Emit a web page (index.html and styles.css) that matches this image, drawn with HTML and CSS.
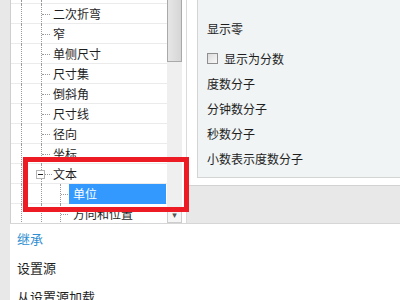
FILE: index.html
```html
<!DOCTYPE html>
<html lang="zh-CN">
<head>
    <meta charset="UTF-8">
    <title>单位设置</title>
    <link rel="stylesheet" href="styles.css">
</head>
<body>
    <div class="page">
        <div class="strip"></div>
        <div class="main">
            <div class="top">
                <!--左侧树-->
                <div class="tree-box">
                    <div class="tree">
                        <div class="row stub"><span class="g0"></span><span class="g1"></span><span class="g2"></span></div>
                        <div class="row"><span class="g0"></span><span class="g1"></span><span class="g2"><i class="dash"></i></span><span class="label">二次折弯</span></div>
                        <div class="row"><span class="g0"></span><span class="g1"></span><span class="g2"><i class="dash"></i></span><span class="label">窄</span></div>
                        <div class="row"><span class="g0"></span><span class="g1"></span><span class="g2"><i class="dash"></i></span><span class="label">单侧尺寸</span></div>
                        <div class="row"><span class="g0"></span><span class="g1"></span><span class="g2"><i class="dash"></i></span><span class="label">尺寸集</span></div>
                        <div class="row"><span class="g0"></span><span class="g1"></span><span class="g2"><i class="dash"></i></span><span class="label">倒斜角</span></div>
                        <div class="row"><span class="g0"></span><span class="g1"></span><span class="g2"><i class="dash"></i></span><span class="label">尺寸线</span></div>
                        <div class="row"><span class="g0"></span><span class="g1"></span><span class="g2"><i class="dash"></i></span><span class="label">径向</span></div>
                        <div class="row"><span class="g0"></span><span class="g1"></span><span class="g2"><i class="dash"></i></span><span class="label">坐标</span></div>
                        <div class="row"><span class="g0"></span><span class="g1"></span><span class="g2"><i class="toggle"></i><i class="dash short"></i></span><span class="label">文本</span></div>
                        <div class="row"><span class="g0"></span><span class="g1"></span><span class="g2 wide"></span><span class="g3"><i class="dash"></i></span><span class="label sub selected">单位</span></div>
                        <div class="row"><span class="g0"></span><span class="g1"></span><span class="g2 wide"></span><span class="g3"><i class="dash"></i></span><span class="label sub">方向和位置</span></div>
                    </div>
                    <div class="scroll">
                        <div class="thumb"></div>
                        <div class="track"></div>
                        <div class="arrow">&#9662;</div>
                    </div>
                </div>
                <!--右侧属性-->
                <div class="right">
                    <div class="panel-wrap">
                        <div class="panel">
                            <div class="item first">显示零</div>
                            <div class="item check"><span class="box"></span>显示为分数</div>
                            <div class="item">度数分子</div>
                            <div class="item">分钟数分子</div>
                            <div class="item">秒数分子</div>
                            <div class="item">小数表示度数分子</div>
                        </div>
                    </div>
                    <div class="gray-bar"></div>
                </div>
            </div>
            <div class="links">
                <a href="javascript:void(0);" class="link active">继承</a>
                <a href="javascript:void(0);" class="link">设置源</a>
                <a href="javascript:void(0);" class="link">从设置源加载</a>
            </div>
        </div>
        <div class="mark"></div><!--红框标注-->
    </div>
</body>
</html>
```

FILE: styles.css
```css
html, body {
    margin: 0;
    padding: 0;
}

body {
    width: 400px;
    height: 300px;
    overflow: hidden;
    background: #ffffff;
    font-family: "Noto Sans CJK SC", "Noto Sans", sans-serif;
    font-size: 12px;
    color: #1e1e1e;
}

.page {
    position: relative;
    display: flex;
    height: 300px;
}

.strip {
    width: 10px;
    flex: none;
    background: #e8e8e8;
}

.main {
    flex: 1;
    display: flex;
    flex-direction: column;
}

.top {
    display: flex;
    height: 224px;
    box-sizing: border-box;
    border-bottom: 1px solid #d6d6d6;
}

/* 树 */
.tree-box {
    display: flex;
    width: 176px;
    box-sizing: border-box;
    border-left: 1px solid #cfcfcf;
    padding-right: 4px;
    flex: none;
}

.tree {
    width: 156px;
    overflow: hidden;
}

.row {
    display: flex;
    height: 20px;
    background: linear-gradient(#ebebeb, #ebebeb) left bottom / 100% 1px no-repeat;
}

.row.stub {
    height: 4px;
}

.g0 {
    width: 10px;
    flex: none;
}

.g1 {
    width: 20px;
    flex: none;
    box-sizing: border-box;
    border-left: 1px dotted #9a9a9a;
}

.g2 {
    width: 12px;
    flex: none;
    box-sizing: border-box;
    border-left: 1px dotted #9a9a9a;
    display: flex;
    align-items: center;
}

.g2.wide {
    width: 19px;
}

.g3 {
    width: 9px;
    flex: none;
    box-sizing: border-box;
    border-left: 1px dotted #9a9a9a;
    display: flex;
    align-items: center;
}

.dash {
    display: block;
    width: 8px;
    height: 0;
    border-top: 1px dotted #9a9a9a;
}

.dash.short {
    width: 7px;
}

.g3 .dash {
    width: 7px;
}

.toggle {
    display: block;
    position: relative;
    flex: none;
    width: 9px;
    height: 9px;
    margin-left: -6px;
    box-sizing: border-box;
    border: 1px solid #b4b4b4;
    background: #ffffff;
}

.toggle::after {
    content: "";
    position: absolute;
    left: 1px;
    top: 3px;
    width: 5px;
    height: 1px;
    background: #222222;
}

.label {
    line-height: 19px;
    padding-left: 0;
    white-space: nowrap;
}

.label.sub {
    flex: 1;
    margin-right: 1px;
    padding-left: 4px;
}

.label.selected {
    background: #3399ff;
    color: #ffffff;
    line-height: 20px;
}

/* 滚动条 */
.scroll {
    width: 15px;
    flex: none;
    display: flex;
    flex-direction: column;
    background: #efefef;
}

.thumb {
    height: 62px;
    box-sizing: border-box;
    border: 1px solid #a9a9a9;
    border-top: none;
    background: linear-gradient(to right, #e6e6e6, #d6d6d6);
}

.track {
    flex: 1;
}

.arrow {
    height: 15px;
    box-sizing: border-box;
    border: 1px solid #cdcdcd;
    background: #f5f5f5;
    color: #555555;
    font-size: 9px;
    line-height: 13px;
    text-align: center;
    font-family: "DejaVu Sans", sans-serif;
}

/* 右侧 */
.right {
    flex: 1;
    display: flex;
    flex-direction: column;
    border-left: 1px solid #dadada;
}

.panel-wrap {
    height: 185px;
    padding-left: 10px;
    box-sizing: border-box;
}

.panel {
    height: 178px;
    box-sizing: border-box;
    padding: 16px 0 0 9px;
    border-left: 1px solid #d4d4d4;
    border-bottom: 1px solid #d4d4d4;
    background: #f0f4f5;
}

.item {
    height: 25px;
    line-height: 25px;
    white-space: nowrap;
}

.item.first {
    margin-bottom: 5px;
}

.item.check {
    display: flex;
    align-items: center;
}

.box {
    width: 11px;
    height: 11px;
    box-sizing: border-box;
    margin-right: 6px;
    border: 1px solid #8f8f8f;
    background: linear-gradient(135deg, #dcdcdc, #f8f8f8);
}

.gray-bar {
    flex: 1;
    border-top: 1px solid #d2d2d2;
    background: #e8e8e8;
}

/* 底部链接 */
.links {
    display: flex;
    flex-direction: column;
    padding-left: 7px;
}

.link {
    line-height: 29px;
    font-size: 13px;
    color: #1e1e1e;
    text-decoration: none;
}

.link.active {
    color: #2f8fd2;
}

/* 红框 */
.mark {
    position: absolute;
    left: 23px;
    top: 157px;
    width: 166px;
    height: 55px;
    box-sizing: border-box;
    border: 5px solid #ed1c24;
}
```
